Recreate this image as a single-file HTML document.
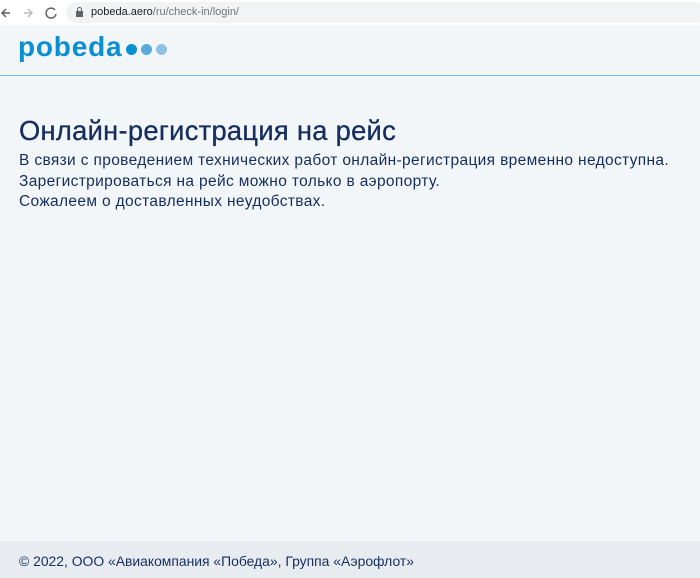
<!DOCTYPE html>
<html><head><meta charset="utf-8"><style>
body{margin:0;width:700px;height:578px;overflow:hidden;background:#f2f6f9;font-family:"Liberation Sans",sans-serif;position:relative}
.bar{position:absolute;top:0;left:0;width:700px;height:25px;background:#fff}
.addr{position:absolute;left:66px;top:2px;width:640px;height:21px;background:#f1f3f4;border-radius:11px}
.url{position:absolute;left:91px;top:6px;font-size:11px;color:#202124}
.url span{color:#70757a}
.hdr{position:absolute;top:25px;left:0;width:700px;height:50px;background:#f2f6f9;border-bottom:1px solid #6cb9e8}
.logo{position:absolute;left:18px;top:31px;font-size:28px;font-weight:bold;color:#0a8fd4;letter-spacing:0.8px}
.dot{position:absolute;top:44px;width:11px;height:11px;border-radius:50%}
h1{position:absolute;left:19px;top:115px;margin:0;font-size:27.3px;font-weight:normal;color:#152d5d;letter-spacing:0.3px;-webkit-text-stroke:0.3px #152d5d}
.txt{position:absolute;left:19px;top:151px;font-size:15.5px;line-height:20.5px;color:#152d5d;letter-spacing:0.35px}
.ft{position:absolute;left:0;top:541px;width:700px;height:37px;background:#e8ecf1}
.ft div{position:absolute;left:19px;top:12px;font-size:13.9px;color:#152d5d}
</style></head><body>
<div class="bar">
<svg style="position:absolute;left:0;top:6px" width="60" height="14"><path d="M10 7H2M6 3L2 7l4 4" stroke="#5f6368" stroke-width="1.5" fill="none"/><path d="M24 7h8M28 3l4 4-4 4" stroke="#bbb" stroke-width="1.5" fill="none"/><path d="M55 4a5 5 0 1 0 1 4" stroke="#5f6368" stroke-width="1.5" fill="none"/></svg>
<div class="addr"></div>
<svg style="position:absolute;left:75px;top:7px" width="9" height="11"><rect x="1" y="4" width="7" height="6" fill="#5f6368"/><path d="M2.5 4V2.5a2 2 0 0 1 4 0V4" stroke="#5f6368" fill="none"/></svg>
<div class="url">pobeda.aero<span>/ru/check-in/login/</span></div>
</div>
<div class="hdr"></div>
<div class="logo">pobeda</div>
<div class="dot" style="left:126px;background:#0a8fd4"></div>
<div class="dot" style="left:141px;background:#5aa9dd"></div>
<div class="dot" style="left:156px;background:#8fc0e6"></div>
<h1>Онлайн-регистрация на рейс</h1>
<div class="txt">В связи с проведением технических работ онлайн-регистрация временно недоступна.<br>Зарегистрироваться на рейс можно только в аэропорту.<br>Сожалеем о доставленных неудобствах.</div>
<div class="ft"><div>© 2022, ООО «Авиакомпания «Победа», Группа «Аэрофлот»</div></div>
</body></html>
